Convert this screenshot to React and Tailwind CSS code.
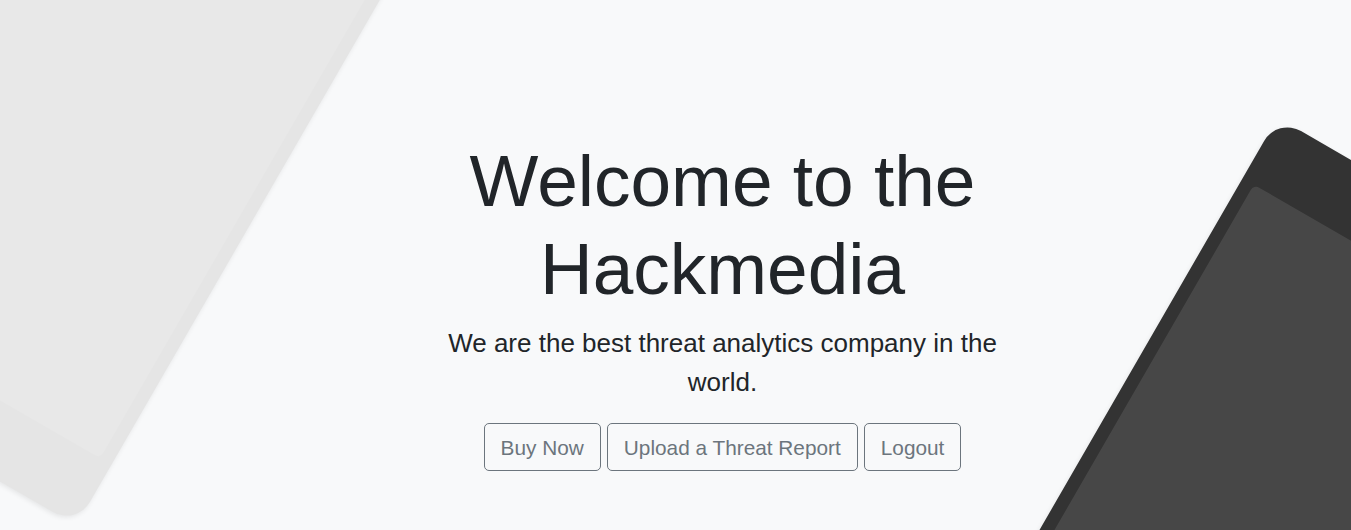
export default function App() {
  return (
    <div
      className="relative h-[530px] w-full overflow-hidden bg-[#f8f9fa] text-[#212529]"
      style={{ fontFamily: '"Liberation Sans", Arial, sans-serif' }}
    >
      {/* light device, top left */}
      <div className="absolute left-[-112px] top-[-227px] h-[702px] w-[390px] rotate-30 rounded-[27px] bg-[#e5e5e5] shadow-[0_2px_5px_rgba(0,0,0,0.08)]">
        <div className="absolute inset-x-[13px] inset-y-[70px] rounded-[6px] bg-white/10" />
      </div>

      {/* dark device, bottom right */}
      <div className="absolute left-[1076px] top-[168px] h-[702px] w-[390px] rotate-30 rounded-[27px] bg-[#333333] shadow-[0_2px_5px_rgba(0,0,0,0.08)]">
        <div className="absolute inset-x-[13px] inset-y-[70px] rounded-[6px] bg-white/10" />
      </div>

      <div className="relative flex justify-center pl-[94px] pt-[137px]">
        <div className="flex w-[590px] flex-col items-center text-center">
          <h1 className="text-[73px] font-normal leading-[88px]">Welcome to the Hackmedia</h1>
          <p className="mt-[11px] text-[26px] leading-[39px]">
            We are the best threat analytics company in the world.
          </p>
          <div className="mt-[21px] flex gap-[6px]">
            <button className="rounded-[5px] border border-[#6c757d] px-4 py-[7.5px] text-[20.8px] leading-[31px] text-[#6c757d]">
              Buy Now
            </button>
            <button className="rounded-[5px] border border-[#6c757d] px-4 py-[7.5px] text-[20.8px] leading-[31px] text-[#6c757d]">
              Upload a Threat Report
            </button>
            <button className="rounded-[5px] border border-[#6c757d] px-4 py-[7.5px] text-[20.8px] leading-[31px] text-[#6c757d]">
              Logout
            </button>
          </div>
        </div>
      </div>
    </div>
  );
}
